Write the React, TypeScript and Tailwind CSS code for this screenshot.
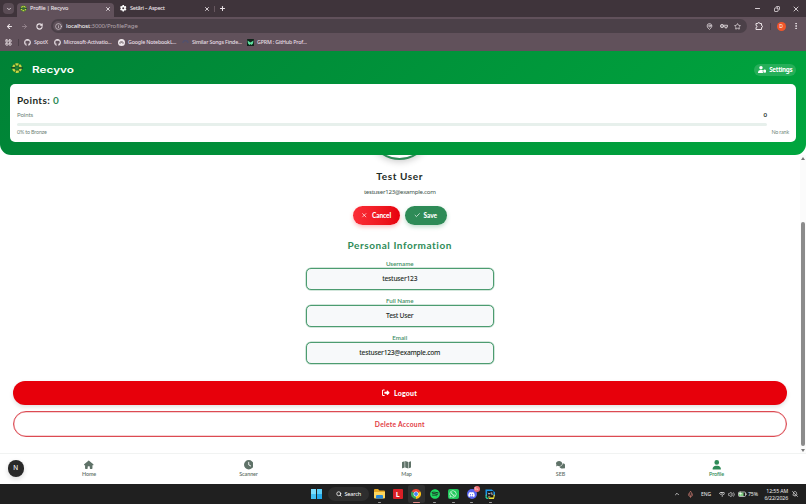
import type { ReactNode } from "react";
import { clsx } from "clsx";
import {
  FaClock,
  FaComments,
  FaGear,
  FaGithub,
  FaHouse,
  FaMap,
  FaRightFromBracket,
  FaSpotify,
  FaUser,
  FaWhatsapp,
  FaDiscord,
  FaWifi,
} from "react-icons/fa6";
import {
  ArrowLeft,
  ArrowRight,
  BellOff,
  Check,
  ChevronDown,
  ChevronUp,
  Copy,
  EllipsisVertical,
  Info,
  LayoutGrid,
  MapPin,
  Mic,
  Minus,
  Plus,
  RotateCw,
  Search,
  Star,
  Volume2,
  X,
} from "lucide-react";

const UI = "font-['Noto_Sans',sans-serif]";
const HEADING = "font-['Lato',sans-serif]";

function RecyvoMark({ className }: { className?: string }) {
  return (
    <svg viewBox="0 0 24 24" className={className} fill="none">
      <circle cx="12" cy="12" r="7" stroke="#2d6b25" strokeWidth="6" />
      <circle cx="12" cy="12" r="7.5" stroke="#c3d843" strokeWidth="4.5" strokeDasharray="6 1.85" />
      <path d="M0 11.5h8M16 12h8" stroke="#174f25" strokeWidth="3" />
      <path d="M12 9l3 2-1 3h-4l-1-3z" fill="#2f7d35" />
    </svg>
  );
}

function TabStrip() {
  return (
    <div className="flex h-[17px] shrink-0 items-stretch bg-[#3f343b] text-[#ece4e8]">
      <div className="ml-[3px] mt-[3px] flex h-[11px] w-[11px] items-center justify-center rounded-[4px] bg-[#5a4c55]">
        <ChevronDown className="size-[6px]" strokeWidth={3.5} />
      </div>
      <div className="ml-[3px] mt-[3px] flex h-[14px] w-[97px] items-center rounded-t-[4px] bg-[#61515b] pb-[3px] pl-[3px] pr-[4px]">
        <RecyvoMark className="size-[7px] shrink-0" />
        <span className="ml-[3px] w-[74.5px] shrink-0 whitespace-nowrap text-[5.6px] font-medium tracking-[-0.25px]">
          Profile | Recyvo
        </span>
        <X className="size-[6px] shrink-0" strokeWidth={3.5} />
      </div>
      <div className="flex w-[96px] items-center pl-[6px]">
        <FaGear className="size-[6.5px] shrink-0 text-white" />
        <span className="ml-[3.5px] w-[74px] shrink-0 text-[5.6px] font-medium tracking-[-0.3px]">Setări – Aspect</span>
        <X className="size-[6px] shrink-0" strokeWidth={3.5} />
      </div>
      <div className="my-auto ml-[4px] h-[6px] w-px bg-[#67575f]" />
      <Plus className="my-auto ml-[3.5px] size-[7px]" strokeWidth={3.5} />
      <div className="ml-auto mr-[6px] flex items-center gap-[12.5px]">
        <Minus className="size-[7px]" strokeWidth={3} />
        <Copy className="size-[6px] -scale-x-100" strokeWidth={3} />
        <X className="size-[8px]" strokeWidth={2.5} />
      </div>
    </div>
  );
}

function AddressBar() {
  return (
    <div className="flex h-[18px] shrink-0 items-center bg-[#61515b] text-[#ece4e8]">
      <ArrowLeft className="ml-[6px] size-[7px]" strokeWidth={3.5} />
      <ArrowRight className="ml-[8px] size-[7px] text-[#978790]" strokeWidth={3} />
      <RotateCw className="ml-[8px] size-[7px]" strokeWidth={3.5} />
      <div className="ml-[8px] flex h-[14px] w-[696px] items-center rounded-full bg-[#4b4048] pr-[6px]">
        <div className="ml-[2px] flex size-[10px] items-center justify-center rounded-full bg-[#5f515a]">
          <Info className="size-[7px]" strokeWidth={2} />
        </div>
        <span className="ml-[3px] pt-px text-[6.1px] tracking-[-0.18px] text-[#b3a6ae]">
          <span className="text-white">localhost</span>:3000/ProfilePage
        </span>
        <div className="ml-auto flex items-center gap-[6.5px]">
          <MapPin className="size-[7px]" strokeWidth={2.5} />
          <svg viewBox="0 0 16 12" className="h-[6px] w-[8px]" fill="none" stroke="currentColor" strokeWidth="1.6">
            <circle cx="4" cy="6" r="3.2" />
            <circle cx="4" cy="6" r="0.8" />
            <path d="M7 4.5h8v3h-1.5V10h-3V7.5H7" />
          </svg>
          <Star className="size-[7px]" strokeWidth={2.5} />
        </div>
      </div>
      <svg viewBox="0 0 16 16" className="ml-[8px] size-[8px]" fill="none" stroke="currentColor" strokeWidth="2">
        <path d="M2 3h3.5a2 2 0 0 1 4 0H13v4a2 2 0 0 1 0 4v4H2v-4a2 2 0 0 0 0-4z" />
      </svg>
      <div className="ml-[6.5px] h-[7px] w-px bg-[#4b4048]" />
      <div className="ml-[6px] flex size-[9px] items-center justify-center rounded-full bg-[#f0562a] text-[5px] text-white">
        D
      </div>
      <EllipsisVertical className="ml-[6px] size-[8px]" strokeWidth={3} />
    </div>
  );
}

function Bookmark({ icon, label, className }: { icon: ReactNode; label: string; className: string }) {
  return (
    <div className={clsx("flex items-center gap-[3px] whitespace-nowrap", className)}>
      {icon}
      <span className="pt-px">{label}</span>
    </div>
  );
}

function BookmarksBar() {
  return (
    <div className="flex h-[15.5px] shrink-0 items-center bg-[#61515b] pb-[1.5px] text-[5.3px] font-medium tracking-[-0.18px] text-[#e8dfe4]">
      <LayoutGrid className="ml-[5px] size-[7px]" strokeWidth={3} />
      <div className="ml-[5.5px] mr-[5.5px] h-[7px] w-px bg-[#4b4048]" />
      <Bookmark className="w-[29.5px]" icon={<FaGithub className="size-[7px] shrink-0" />} label="SpotX" />
      <Bookmark className="w-[64.5px]" icon={<FaGithub className="size-[7px] shrink-0" />} label="Microsoft-Activatio..." />
      <Bookmark
        className="w-[64px]"
        icon={
          <svg viewBox="0 0 14 14" className="size-[7px] shrink-0">
            <circle cx="7" cy="7" r="7" fill="#eee7eb" />
            <path d="M3 9a4 4 0 0 1 8 0M5 9a2 2 0 0 1 4 0" fill="none" stroke="#55464f" strokeWidth="1.2" />
          </svg>
        }
        label="Google NotebookL..."
      />
      <Bookmark
        className="w-[65px]"
        icon={
          <svg viewBox="0 0 14 14" className="size-[7px] shrink-0">
            <path d="M2 8a5 5 0 0 1 10 0" fill="none" stroke="#51516e" strokeWidth="2.5" />
          </svg>
        }
        label="Similar Songs Finde..."
      />
      <Bookmark
        className="w-[70px]"
        icon={
          <svg viewBox="0 0 14 14" className="size-[7px] shrink-0">
            <rect width="14" height="14" rx="1" fill="#10251b" />
            <path d="M1 3l3 2 3 2 3-2 3-2-1 6-3 3-2-2-2 2-3-3z" fill="#5fe0a0" />
          </svg>
        }
        label="GPRM : GitHub Prof..."
      />
    </div>
  );
}

function PointsHeader() {
  return (
    <header className="h-[104.5px] shrink-0 rounded-b-[11px] bg-linear-135 from-[#008236] to-[#00a63e] px-[10px] pt-[9px] text-white">
      <div className="flex h-[24.5px] items-start">
        <RecyvoMark className="ml-[0.5px] mt-[2px] size-[12px]" />
        <span className="ml-[9.5px] mt-[5px] w-[42px] origin-left scale-x-[1.31] font-['Inter',sans-serif] text-[9px] font-semibold leading-[10px]">
          Recyvo
        </span>
        <button className="ml-auto mt-[4px] flex h-[12px] w-[42px] items-center justify-center gap-[3px] rounded-full bg-white/15 font-['Noto_Sans',sans-serif] text-[6.2px] font-bold tracking-[-0.3px]">
          <svg viewBox="0 0 20 16" className="h-[7px] w-[8.5px]" fill="currentColor">
            <circle cx="7" cy="4" r="4" />
            <path d="M0 15q0-6 5-6h4q2 0 3 1-2 3 0 6H0z" />
            <circle cx="16" cy="12" r="3.2" />
            <path d="M16 7.5v9M12 9.7l8 4.6M20 9.7l-8 4.6" stroke="currentColor" strokeWidth="1.6" />
          </svg>
          <span className="pt-px">Settings</span>
        </button>
      </div>
      <section className="h-[57.5px] rounded-[5px] bg-white px-[7px] pt-[9px] text-[#71857b]">
        <h2 className={clsx(HEADING, "h-[14px] text-[10px] font-bold leading-[14px] tracking-[0.38px] text-[#1d2b25]")}>
          Points: <span className="text-[#2e8b57]">0</span>
        </h2>
        <div className={clsx(HEADING, "mr-[22px] mt-[4px] flex h-[8px] items-center justify-between text-[6.1px] tracking-[-0.08px]")}>
          <span>Points</span>
          <span className="font-bold text-[#1d2b25]">0</span>
        </div>
        <div className="mr-[22px] mt-[4px] h-[3px] rounded-full bg-[#e7f0ec]" />
        <div className={clsx(HEADING, "mt-[4px] flex h-[6px] items-center justify-between text-[5.4px] tracking-[-0.18px]")}>
          <span>0% to Bronze</span>
          <span>No rank</span>
        </div>
      </section>
    </header>
  );
}

function Field({ label, value }: { label: string; value: string }) {
  return (
    <label className="mb-[6px] block w-[188px] text-center">
      <span className={clsx(HEADING, "block h-[9px] text-[6.2px] font-semibold leading-[9px] text-[#428f65]")}>
        {label}
      </span>
      <span className="flex h-[22px] items-center justify-center rounded-[5px] border border-[#4c9c70] bg-[#f7f9fa] pt-[2px] text-[6.7px] font-medium tracking-[-0.25px] text-[#1d2b25] shadow-[0_0_0_0.5px_#4c9c7080]">
        {value}
      </span>
    </label>
  );
}

function ProfileContent() {
  return (
    <main className="flex w-[799.5px] flex-col items-center overflow-hidden bg-white">
      <div className="-mt-[58.5px] size-[63px] shrink-0 rounded-full border-2 border-[#2e8b57] shadow-[0_2px_7px_rgba(0,0,0,0.2)]" />
      <h1 className={clsx(HEADING, "mt-[9.5px] h-[14px] text-[10px] font-bold leading-[14px] tracking-[0.6px] text-[#1d2b25]")}>
        Test User
      </h1>
      <p className="mt-[3.5px] h-[9px] text-[6.1px] leading-[9px] tracking-[-0.26px] text-[#40534a]">testuser123@example.com</p>
      <div className={clsx(HEADING, "mt-[10.5px] flex gap-[5px] text-[6.6px] font-black tracking-[-0.13px] text-white")}>
        <button className="flex h-[19px] w-[46.5px] items-center justify-center gap-[4px] rounded-full bg-linear-to-r from-[#fb2c36] to-[#e7000b] shadow-[0_2px_4px_rgba(231,0,11,0.25)]">
          <X className="size-[6.5px]" strokeWidth={2.5} />
          Cancel
        </button>
        <button className="flex h-[19px] w-[42px] items-center justify-center gap-[3px] rounded-full bg-[#2e8b57] shadow-[0_2px_4px_rgba(46,139,87,0.3)]">
          <Check className="size-[6.5px]" strokeWidth={2.5} />
          Save
        </button>
      </div>
      <h2 className={clsx(HEADING, "mb-[7px] mt-[12.5px] h-[14px] text-[10px] font-bold leading-[14px] tracking-[0.56px] text-[#2e8b57]")}>
        Personal Information
      </h2>
      <Field label="Username" value="testuser123" />
      <Field label="Full Name" value="Test User" />
      <Field label="Email" value="testuser123@example.com" />
      <button
        className={clsx(
          HEADING,
          "mt-[11.5px] flex h-[24px] w-[773.5px] shrink-0 items-center justify-center gap-[4px] rounded-full bg-[#e7000b] text-[7px] font-black tracking-[0.2px] text-white shadow-[0_2px_4px_rgba(0,0,0,0.12)]",
        )}
      >
        <FaRightFromBracket className="size-[7.5px]" />
        Logout
      </button>
      <button
        className={clsx(
          HEADING,
          "mt-[6px] h-[26px] w-[773.5px] shrink-0 rounded-full border border-[#dc4a52] bg-white text-[6.7px] font-bold tracking-[0.28px] text-[#e23a43] shadow-[inset_0_0_0_0.5px_#dc4a5280]",
        )}
      >
        Delete Account
      </button>
    </main>
  );
}

function Scrollbar() {
  return (
    <div className="flex flex-1 flex-col items-center bg-[#fbfbfb] pb-[1.5px] pt-[2px]">
      <svg viewBox="0 0 4 3" className="h-[3px] w-[4px]"><path d="M0 3L2 0l2 3z" fill="#777" /></svg>
      <div className="mt-[62px] w-[4px] flex-1 rounded-full bg-[#8b8b8b]" />
      <svg viewBox="0 0 4 3" className="mt-[2.5px] h-[3px] w-[4px]"><path d="M0 0l2 3 2-3z" fill="#777" /></svg>
    </div>
  );
}

const NAV = [
  { label: "Home", Icon: FaHouse },
  { label: "Scanner", Icon: FaClock },
  { label: "Map", Icon: FaMap },
  { label: "SEB", Icon: FaComments },
  { label: "Profile", Icon: FaUser, active: true },
];

function BottomNav() {
  return (
    <nav className="relative grid h-[31px] shrink-0 grid-cols-[178px_141px_175px_133px_179px] border-t border-[#f1f3f2] bg-white">
      {NAV.map(({ label, Icon, active }) => (
        <div key={label} className={clsx("flex flex-col items-center pt-[6px]", active ? "text-[#2e8b57]" : "text-[#5f7268]")}>
          <Icon className="size-[9.5px]" />
          <span className={clsx(HEADING, "mt-[1.5px] text-[5.4px] font-semibold leading-[6px] tracking-[-0.1px]")}>{label}</span>
        </div>
      ))}
      <div className="absolute left-[7.5px] top-[6px] flex size-[16.5px] items-center justify-center rounded-full bg-[#292929] font-['Inter',sans-serif] text-[6.5px] text-white shadow-[0_2px_5px_rgba(0,0,0,0.15)]">
        N
      </div>
    </nav>
  );
}

function TaskIcon({ children, state }: { children: ReactNode; state?: "open" | "focused" }) {
  return (
    <div
      className={clsx(
        "relative flex h-[18px] w-[16.5px] items-center justify-center rounded-[2px]",
        state === "focused" && "bg-[#303030]",
      )}
    >
      {children}
      {state && (
        <span
          className={clsx(
            "absolute bottom-0 h-[1.5px] rounded-full",
            state === "focused" ? "w-[7px] bg-[#e58b88]" : "w-[3px] bg-[#9b9b9b]",
          )}
        />
      )}
    </div>
  );
}

function Taskbar() {
  return (
    <footer className="flex h-[20px] shrink-0 items-center bg-[#202020] text-white">
      <div className="ml-[311px] grid size-[10.5px] grid-cols-2 gap-[0.5px]">
        <span className="bg-[#7bdcfb]" />
        <span className="bg-[#59cdf8]" />
        <span className="bg-[#42bff2]" />
        <span className="bg-[#24a9ea]" />
      </div>
      <div className="ml-[6px] flex h-[14px] w-[41px] items-center rounded-full bg-[#2e2e2e] pl-[8.5px] text-[5.6px] tracking-[-0.2px]">
        <Search className="mr-[2.5px] size-[6px]" strokeWidth={3} />
        <span className="pt-px">Search</span>
      </div>
      <div className="ml-[2.5px] flex items-center gap-[2px]">
        <TaskIcon state="open">
          <svg viewBox="0 0 22 20" className="h-[10px] w-[11px]">
            <path d="M0 2q0-2 2-2h6l3 3h9q2 0 2 2v12H0z" fill="#e8a922" />
            <path d="M0 6h22v11q0 2-2 2H2q-2 0-2-2z" fill="#ffd75e" />
            <path d="M4 14q0-2 2-2h10q2 0 2 2v5H4z" fill="#2888d8" />
          </svg>
        </TaskIcon>
        <TaskIcon>
          <span className="flex size-[10.5px] items-center justify-center rounded-[1px] bg-[#d91f26] font-['Open_Sans',sans-serif] text-[7px] font-bold">
            L
          </span>
        </TaskIcon>
        <TaskIcon state="focused">
          <svg viewBox="0 0 20 20" className="size-[10px]">
            <path d="M10 10L1.3 5A10 10 0 0 1 18.7 5z" fill="#ea4335" />
            <path d="M10 10L18.7 5A10 10 0 0 1 10 20z" fill="#fbc116" />
            <path d="M10 10v10A10 10 0 0 1 1.3 5z" fill="#34a853" />
            <circle cx="10" cy="10" r="5" fill="#fff" />
            <circle cx="10" cy="10" r="3.9" fill="#4285f4" />
          </svg>
        </TaskIcon>
        <TaskIcon state="open">
          <FaSpotify className="size-[10px] text-[#1ed760]" />
        </TaskIcon>
        <TaskIcon state="open">
          <span className="flex size-[10.5px] items-center justify-center rounded-[2px] bg-[#20c85b]">
            <FaWhatsapp className="size-[8px]" />
          </span>
        </TaskIcon>
        <TaskIcon state="open">
          <span className="flex size-[10px] items-center justify-center rounded-full bg-[#5865f2]">
            <FaDiscord className="size-[7px]" />
          </span>
          <span className="absolute right-[0.5px] top-[1px] flex size-[6px] items-center justify-center rounded-full bg-[#ee6a72] text-[3.5px] leading-none">
            9+
          </span>
        </TaskIcon>
        <TaskIcon state="open">
          <svg viewBox="0 0 20 20" className="size-[10.5px]">
            <path d="M1 1h12l6 5v7H1z" fill="#1996e8" />
            <path d="M2 11l6 8h9l2-8z" fill="#e8dd39" />
            <path d="M1 11l6 8H3l-2-3z" fill="#22c99a" />
            <rect x="4" y="4" width="12" height="12" fill="#101010" />
            <path d="M6 7l1 3 1-2 1 2 1-3M14 7h-2v2h2v2h-2M6 14h4" fill="none" stroke="#fff" />
          </svg>
        </TaskIcon>
      </div>
      <div className="ml-auto flex items-center pr-[8px] text-[5.5px] text-[#eee]">
        <ChevronUp className="size-[6px]" strokeWidth={3} />
        <Mic className="ml-[7px] size-[7px] text-[#c87970]" strokeWidth={2.5} />
        <span className="ml-[7px] w-[10px] text-[5px]">ENG</span>
        <FaWifi className="ml-[7.5px] size-[6.5px]" />
        <Volume2 className="ml-[3px] size-[7px]" strokeWidth={2} />
        <svg viewBox="0 0 18 12" className="ml-[3px] h-[6px] w-[9px]">
          <rect x="1" y="2" width="14" height="9" rx="2" fill="none" stroke="#eee" strokeWidth="1.4" />
          <path d="M2 3h9v7H2z" fill="#7fce80" />
          <path d="M5 0L2 6h3l-1 4 4-6H5z" fill="#e8f7e6" />
          <path d="M16.5 5v3" stroke="#eee" strokeWidth="1.4" />
        </svg>
        <span className="ml-px w-[10px] pt-px text-[5.2px] tracking-[-0.15px]">75%</span>
        <div className="ml-[6px] w-[24px] whitespace-nowrap pt-px text-right text-[5.2px] leading-[7px] tracking-[-0.12px]">
          <div>12:55 AM</div>
          <div>6/22/2026</div>
        </div>
        <BellOff className="ml-[4px] size-[6px]" strokeWidth={2.5} />
      </div>
    </footer>
  );
}

export default function App() {
  return (
    <div className={clsx(UI, "flex h-[504px] w-[806px] flex-col overflow-hidden bg-white leading-none")}>
      <TabStrip />
      <AddressBar />
      <BookmarksBar />
      <PointsHeader />
      <div className="flex h-[298px] shrink-0">
        <ProfileContent />
        <Scrollbar />
      </div>
      <BottomNav />
      <Taskbar />
    </div>
  );
}
